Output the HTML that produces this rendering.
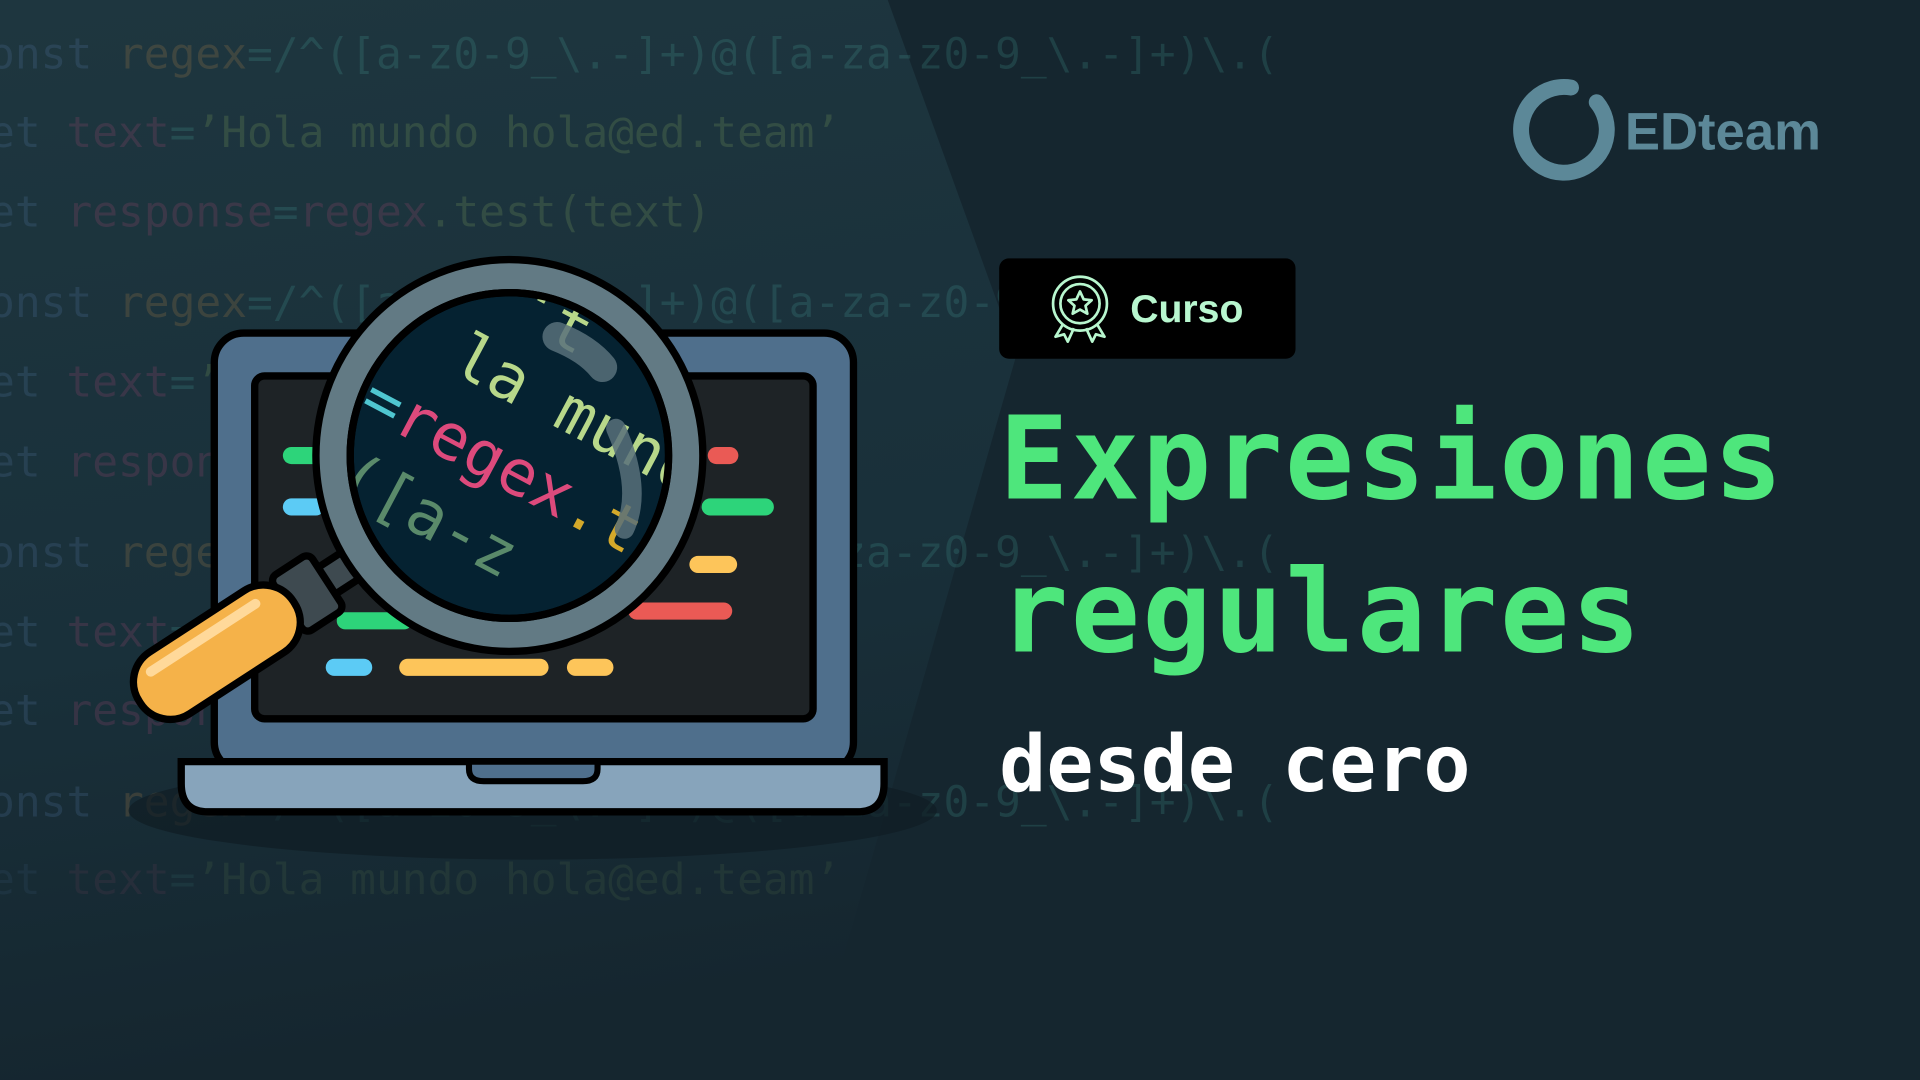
<!DOCTYPE html>
<html><head><meta charset="utf-8"><style>
html,body{margin:0;padding:0;width:1920px;height:1080px;overflow:hidden;background:#15262f}
svg{display:block}
</style></head><body>
<svg width="1920" height="1080" viewBox="0 0 1568 882" xmlns="http://www.w3.org/2000/svg">
<defs>
<linearGradient id="bgl" x1="0" y1="0" x2="0.15" y2="1">
<stop offset="0" stop-color="#1e363f"/><stop offset="0.6" stop-color="#19303a"/><stop offset="1" stop-color="#15262f"/></linearGradient>
<clipPath id="lens"><ellipse cx="416" cy="372" rx="130" ry="133"/></clipPath>
</defs>
<rect width="1568" height="882" fill="#15262f"/>
<polygon points="0,0 725,0 830,290 660,882 0,882" fill="url(#bgl)"/>
<g font-family="'DejaVu Sans Mono','Liberation Mono',monospace" font-size="35" opacity="0.2">
<text x="-30" y="56"><tspan fill="#5a7fb0">const </tspan><tspan fill="#c08a4a">regex</tspan><tspan fill="#4aa8a0">=/^([a-z0-9_\.-]+)@([a-za-z0-9_\.-]+)\.(</tspan></text>
<text x="-30" y="120"><tspan fill="#5a7fb0">let </tspan><tspan fill="#b04a78">text</tspan><tspan fill="#4aa8a0">=</tspan><tspan fill="#8ab060">’Hola mundo hola@ed.team’</tspan></text>
<text x="-30" y="185"><tspan fill="#5a7fb0">let </tspan><tspan fill="#b04a78">response</tspan><tspan fill="#4aa8a0">=</tspan><tspan fill="#b04a78">regex</tspan><tspan fill="#8ab060">.test(text)</tspan></text>
<text x="-30" y="259"><tspan fill="#5a7fb0">const </tspan><tspan fill="#c08a4a">regex</tspan><tspan fill="#4aa8a0">=/^([a-z0-9_\.-]+)@([a-za-z0-9_\.-]+)\.(</tspan></text>
<text x="-30" y="324"><tspan fill="#5a7fb0">let </tspan><tspan fill="#b04a78">text</tspan><tspan fill="#4aa8a0">=</tspan><tspan fill="#8ab060">’Hola mundo hola@ed.team’</tspan></text>
<text x="-30" y="389"><tspan fill="#5a7fb0">let </tspan><tspan fill="#b04a78">response</tspan><tspan fill="#4aa8a0">=</tspan><tspan fill="#b04a78">regex</tspan><tspan fill="#8ab060">.test(text)</tspan></text>
<text x="-30" y="463"><tspan fill="#5a7fb0">const </tspan><tspan fill="#c08a4a">regex</tspan><tspan fill="#4aa8a0">=/^([a-z0-9_\.-]+)@([a-za-z0-9_\.-]+)\.(</tspan></text>
<text x="-30" y="528"><tspan fill="#5a7fb0">let </tspan><tspan fill="#b04a78">text</tspan><tspan fill="#4aa8a0">=</tspan><tspan fill="#8ab060">’Hola mundo hola@ed.team’</tspan></text>
<text x="-30" y="592"><tspan fill="#5a7fb0">let </tspan><tspan fill="#b04a78">response</tspan><tspan fill="#4aa8a0">=</tspan><tspan fill="#b04a78">regex</tspan><tspan fill="#8ab060">.test(text)</tspan></text>
<text x="-30" y="667"><tspan fill="#5a7fb0">const </tspan><tspan fill="#c08a4a">regex</tspan><tspan fill="#4aa8a0">=/^([a-z0-9_\.-]+)@([a-za-z0-9_\.-]+)\.(</tspan></text>
<text x="-30" y="730" opacity="0.5"><tspan fill="#5a7fb0">let </tspan><tspan fill="#b04a78">text</tspan><tspan fill="#4aa8a0">=</tspan><tspan fill="#8ab060">’Hola mundo hola@ed.team’</tspan></text>
</g>
<ellipse cx="435" cy="662" rx="330" ry="40" fill="#0f1d24" opacity="0.7"/>
<rect x="175" y="272" width="522" height="358" rx="24" fill="#4f6f8c" stroke="#000" stroke-width="6"/>
<rect x="208" y="307" width="456" height="280" rx="8" fill="#1e2326" stroke="#000" stroke-width="6"/>
<g stroke-linecap="round" stroke-width="14">
<line x1="238" y1="372" x2="255" y2="372" stroke="#2dd47a"/>
<line x1="585" y1="372" x2="596" y2="372" stroke="#ea5a55"/>
<line x1="238" y1="414" x2="258" y2="414" stroke="#5ccbf5"/>
<line x1="580" y1="414" x2="625" y2="414" stroke="#2dd47a"/>
<line x1="570" y1="461" x2="595" y2="461" stroke="#fdc55a"/>
<line x1="282" y1="507" x2="330" y2="507" stroke="#2dd47a"/>
<line x1="520" y1="499" x2="591" y2="499" stroke="#ea5a55"/>
<line x1="273" y1="545" x2="297" y2="545" stroke="#5ccbf5"/>
<line x1="333" y1="545" x2="441" y2="545" stroke="#fdc55a"/>
<line x1="470" y1="545" x2="494" y2="545" stroke="#fdc55a"/>
</g>
<path d="M148 622 H722 V640 Q722 663 700 663 H170 Q148 663 148 640 Z" fill="#87a4bb" stroke="#000" stroke-width="6"/>
<path d="M383 622 H488 V628 Q488 638 476 638 H395 Q383 638 383 628 Z" fill="#4f6f8c" stroke="#000" stroke-width="5"/>
<!-- handle -->
<g transform="translate(292,458) rotate(147)">
<rect x="-10" y="-13" width="45" height="26" fill="#3e4a50" stroke="#000" stroke-width="6"/>
<rect x="30" y="-27" width="38" height="54" rx="6" fill="#3e4a50" stroke="#000" stroke-width="6"/>
<rect x="62" y="-30" width="150" height="60" rx="29" fill="#f5b249" stroke="#000" stroke-width="6"/>
<rect x="85" y="12" width="110" height="8" rx="4" fill="#ffd99a"/>
</g>
<ellipse cx="416" cy="372" rx="158" ry="160" fill="#627a84" stroke="#000" stroke-width="6"/>
<ellipse cx="416" cy="372" rx="130" ry="133" fill="#052231" stroke="#000" stroke-width="6"/>
<g clip-path="url(#lens)" font-family="'DejaVu Sans Mono','Liberation Mono',monospace" font-size="52">
<g transform="translate(-25,25) rotate(28 416 372)">
<text x="375" y="240" fill="#b8d88a">‘t</text>
<text x="350" y="300" fill="#b8d88a">la mundo</text>
<text x="268" y="365" fill="#4fc6d0">e=<tspan fill="#dd4a7c">regex</tspan><tspan fill="#d4a92a">.t</tspan></text>
<text x="250" y="430" fill="#5a8a6a">/^([a-z</text>
</g>
<path d="M455 275 Q480 285 492 300" stroke="#58707a" stroke-width="24" fill="none" stroke-linecap="round" opacity="0.85"/>
<path d="M503 350 Q525 400 510 432" stroke="#58707a" stroke-width="16" fill="none" stroke-linecap="round" opacity="0.85"/>
</g>
<ellipse cx="416" cy="372" rx="130" ry="133" fill="none" stroke="#000" stroke-width="6"/>
<!-- logo -->
<path d="M1283 71.5 A35 35 0 1 0 1304 83.5" fill="none" stroke="#5c8898" stroke-width="13" stroke-linecap="round"/>
<path d="M1306 86 A35 35 0 0 1 1310 112" fill="none" stroke="#5c8898" stroke-width="3"/>
<text x="1327" y="122" font-family="'Liberation Sans',sans-serif" font-weight="bold" font-size="43" fill="#5c8898">EDteam</text>
<rect x="816" y="211" width="242" height="82" rx="8" fill="#000"/>
<g fill="none" stroke="#b8f7cf" stroke-width="2.2" stroke-linejoin="round">
<circle cx="882" cy="248" r="22"/>
<circle cx="882" cy="248" r="16"/>
<path d="M882 238 l3 6.5 6.5 .7 -5 4.5 1.5 6.5 -6 -3.4 -6 3.4 1.5 -6.5 -5 -4.5 6.5 -.7z"/>
<path d="M868 265 l-6 10 7 -2 3 6 5 -11 M896 265 l6 10 -7 -2 -3 6 -5 -11"/>
</g>
<text x="923" y="263" font-family="'Liberation Sans',sans-serif" font-weight="bold" font-size="32" fill="#b8f7cf">Curso</text>
<g font-family="'DejaVu Sans Mono','Liberation Mono',monospace" font-weight="bold">
<text x="816" y="407" font-size="94" fill="#4ee67c" textLength="640">Expresiones</text>
<text x="816" y="532" font-size="94" fill="#4ee67c" textLength="524">regulares</text>
<text x="816" y="646" font-size="64" fill="#ffffff" textLength="385">desde cero</text>
</g>
</svg>
</body></html>
